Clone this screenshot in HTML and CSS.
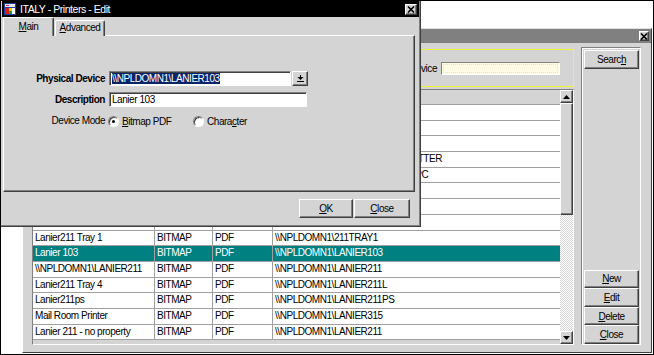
FILE: index.html
```html
<!DOCTYPE html>
<html lang="en">
<head>
    <meta charset="UTF-8">
    <title>ITALY - Printers</title>
    <link rel="stylesheet" href="styles.css">
</head>
<body>
<div class="desktop">

    <!-- printers list window (behind) -->
    <div class="window main-win">
        <div class="titlebar inactive">
            <span class="x-btn small">
                <svg width="8" height="7" viewBox="0 0 8 7"><path d="M1 0.5l6 6M7 0.5l-6 6" stroke="#000" stroke-width="1.6"/></svg>
            </span>
        </div>
        <div class="win-body">
            <div class="list-col">
                <div class="search-box">
                    <span class="search-label">Physical Device</span>
                    <div class="search-input"></div>
                </div>
                <div class="grid">
                    <div class="grid-rows">
                        <div class="grid-head">
                            <div class="cell"></div>
                            <div class="cell"></div>
                            <div class="cell"></div>
                            <div class="cell"></div>
                        </div>
                        <!-- rows 1-8 sit under the edit dialog -->
                        <div class="row"><div class="cell"></div><div class="cell"></div><div class="cell"></div><div class="cell"></div></div>
                        <div class="row"><div class="cell"></div><div class="cell"></div><div class="cell"></div><div class="cell"></div></div>
                        <div class="row"><div class="cell"></div><div class="cell"></div><div class="cell"></div><div class="cell"></div></div>
                        <div class="row"><div class="cell"></div><div class="cell"></div><div class="cell"></div><div class="cell tail">\\NPLDOMN1\HPDESIGNJETPLOTTER</div></div>
                        <div class="row"><div class="cell"></div><div class="cell"></div><div class="cell"></div><div class="cell tail">\\NPLDOMN1\LANIER211COLORPC</div></div>
                        <div class="row"><div class="cell"></div><div class="cell"></div><div class="cell"></div><div class="cell"></div></div>
                        <div class="row"><div class="cell"></div><div class="cell"></div><div class="cell"></div><div class="cell"></div></div>
                        <div class="row"><div class="cell"></div><div class="cell"></div><div class="cell"></div><div class="cell"></div></div>
                        <div class="row"><div class="cell">Lanier211 Tray 1</div><div class="cell">BITMAP</div><div class="cell">PDF</div><div class="cell">\\NPLDOMN1\211TRAY1</div></div>
                        <div class="row selected"><div class="cell">Lanier 103</div><div class="cell">BITMAP</div><div class="cell">PDF</div><div class="cell">\\NPLDOMN1\LANIER103</div></div>
                        <div class="row"><div class="cell">\\NPLDOMN1\LANIER211</div><div class="cell">BITMAP</div><div class="cell">PDF</div><div class="cell">\\NPLDOMN1\LANIER211</div></div>
                        <div class="row"><div class="cell">Lanier211 Tray 4</div><div class="cell">BITMAP</div><div class="cell">PDF</div><div class="cell">\\NPLDOMN1\LANIER211L</div></div>
                        <div class="row"><div class="cell">Lanier211ps</div><div class="cell">BITMAP</div><div class="cell">PDF</div><div class="cell">\\NPLDOMN1\LANIER211PS</div></div>
                        <div class="row"><div class="cell">Mail Room Printer</div><div class="cell">BITMAP</div><div class="cell">PDF</div><div class="cell">\\NPLDOMN1\LANIER315</div></div>
                        <div class="row"><div class="cell">Lanier 211 - no property</div><div class="cell">BITMAP</div><div class="cell">PDF</div><div class="cell">\\NPLDOMN1\LANIER211</div></div>
                    </div>
                    <div class="vscroll">
                        <span class="sb-btn">
                            <svg width="7" height="4" viewBox="0 0 7 4"><path d="M3.5 0L7 4H0z" fill="#000"/></svg>
                        </span>
                        <div class="sb-track">
                            <div class="sb-thumb"></div>
                        </div>
                        <span class="sb-btn">
                            <svg width="7" height="4" viewBox="0 0 7 4"><path d="M0 0h7L3.5 4z" fill="#000"/></svg>
                        </span>
                    </div>
                </div>
            </div>
            <div class="btn-panel">
                <button class="btn">Searc<u>h</u></button>
                <div class="btn-stack">
                    <button class="btn"><u>N</u>ew</button>
                    <button class="btn"><u>E</u>dit</button>
                    <button class="btn"><u>D</u>elete</button>
                    <button class="btn"><u>C</u>lose</button>
                </div>
            </div>
        </div>
    </div>

    <!-- edit dialog (front) -->
    <div class="window dialog">
        <div class="titlebar active">
            <svg class="app-icon" width="12" height="12" viewBox="0 0 12 12">
                <rect x="0" y="0" width="12" height="12" fill="#1c3fa8"/>
                <rect x="1" y="1" width="10" height="3" fill="#e8e8e8"/>
                <rect x="1" y="5" width="4" height="6" fill="#d62020"/>
                <rect x="5" y="5" width="3" height="3" fill="#f0d000"/>
                <rect x="8" y="5" width="3" height="6" fill="#ffffff"/>
                <rect x="5" y="8" width="3" height="3" fill="#2a9a2a"/>
                <rect x="2" y="2" width="3" height="1" fill="#c03070"/>
            </svg>
            <span class="title">ITALY - Printers - Edit</span>
            <span class="x-btn">
                <svg width="8" height="7" viewBox="0 0 8 7"><path d="M1 0.5l6 6M7 0.5l-6 6" stroke="#000" stroke-width="1.6"/></svg>
            </span>
        </div>

        <div class="tabs">
            <div class="tab current"><u>M</u>ain</div>
            <div class="tab"><u>A</u>dvanced</div>
        </div>

        <div class="tab-panel">
            <div class="form">
                <label class="lbl bold">Physical Device</label>
                <div class="field-line">
                    <div class="input device-input"><span class="sel">\\NPLDOMN1\LANIER103</span></div>
                    <span class="drop-btn">
                        <svg width="7" height="8" viewBox="0 0 7 8"><path d="M3 0h1v2h2.5L3.5 5 0.5 2H3z" fill="#000"/><rect x="0" y="6" width="7" height="1" fill="#000"/></svg>
                    </span>
                </div>

                <label class="lbl bold">Description</label>
                <div class="field-line">
                    <div class="input desc-input">Lanier 103</div>
                </div>

                <label class="lbl">Device Mode</label>
                <div class="radio-group">
                    <span class="option first"><span class="radio checked"></span><u>B</u>itmap PDF</span>
                    <span class="option"><span class="radio"></span>Chara<u>c</u>ter</span>
                </div>
            </div>
        </div>

        <div class="dlg-footer">
            <button class="btn dlg-btn ok"><u>O</u>K</button>
            <button class="btn dlg-btn close"><u>C</u>lose</button>
        </div>
    </div>

</div>
</body>
</html>
```

FILE: styles.css
```css
* {
    box-sizing: border-box;
}
body {
    margin: 0;
    font-family: "Liberation Sans", Arial, sans-serif;
    font-size: 10px;
    letter-spacing: -0.45px;
    color: #000;
}
u {
    text-decoration: underline;
    text-underline-offset: 1px;
}
.desktop {
    position: relative;
    width: 654px;
    height: 355px;
    background: #fff;
    border: 1px solid #000;
    overflow: hidden;
}

/* generic window chrome */
.window {
    position: absolute;
    background: #d4d4d4;
    display: flex;
    flex-direction: column;
}
.titlebar {
    display: flex;
    align-items: center;
    flex-shrink: 0;
}
.titlebar.inactive {
    height: 14px;
    background: #808080;
    justify-content: flex-end;
    padding-right: 2px;
}
.titlebar.active {
    height: 16px;
    background: #000;
    color: #fff;
    padding: 0 2px 0 2px;
}
.app-icon {
    margin-right: 4px;
}
.title {
    flex: 1;
    color: #fff;
    font-size: 10.5px;
}
.x-btn {
    width: 12px;
    height: 11px;
    background: #d4d4d4;
    border: 1px solid;
    border-color: #fff #404040 #404040 #fff;
    box-shadow: inset -1px -1px #808080;
    display: flex;
    align-items: center;
    justify-content: center;
}
.x-btn.small {
    width: 10px;
    height: 10px;
}
.x-btn svg {
    display: block;
}

/* buttons */
.btn {
    font: inherit;
    letter-spacing: inherit;
    color: #000;
    background: #d4d4d4;
    border: 1px solid;
    border-color: #fff #404040 #404040 #fff;
    box-shadow: inset -1px -1px #808080;
    padding: 0;
    display: flex;
    align-items: center;
    justify-content: center;
}

/* printers list window */
.main-win {
    left: 21px;
    top: 27px;
    width: 630px;
    height: 325px;
    border-top: 1px solid #e0e0e0;
    border-left: 1px solid #fff;
    border-right: 1px solid #404040;
    border-bottom: 1px solid #404040;
}
.win-body {
    flex: 1;
    display: flex;
    padding: 4px 9px 7px 9px;
}
.list-col {
    width: 542px;
    margin-top: 2px;
    display: flex;
    flex-direction: column;
}
.search-box {
    height: 38px;
    border: 1px solid #f4f430;
    display: flex;
    align-items: center;
    justify-content: flex-end;
    padding-right: 13px;
    padding-top: 1px;
}
.search-label {
    margin-right: 4px;
}
.search-input {
    width: 119px;
    height: 13px;
    background: #fffbe4;
    border: 1px solid;
    border-color: #808080 #fff #fff #808080;
    outline: 1px dotted #f0e0b0;
    outline-offset: -3px;
}
.grid {
    flex: 1;
    margin-top: 2px;
    display: flex;
    border: 1px solid;
    border-color: #808080 #fff #fff #808080;
    background: #d4d4d4;
}
.grid-rows {
    flex: 1;
    display: flex;
    flex-direction: column;
    overflow: hidden;
}
.grid-head,
.row {
    display: grid;
    grid-template-columns: 122px 58px 60px 1fr;
    flex-shrink: 0;
}
.grid-head {
    height: 15px;
    background: #d4d4d4;
    border-bottom: 1px solid #a0a0a0;
}
.row {
    height: 15.7px;
    background: #fff;
    border-bottom: 1px solid #a0a0a0;
}
.cell {
    padding-left: 2px;
    line-height: 14px;
    white-space: nowrap;
    overflow: hidden;
    border-right: 1px solid #a0a0a0;
}
.cell:last-child {
    border-right: none;
}
.grid-head .cell {
    border-right: none;
}
.row.selected {
    background: #008080;
    color: #fff;
}
.vscroll {
    width: 13px;
    display: flex;
    flex-direction: column;
}
.sb-btn {
    height: 13px;
    flex-shrink: 0;
    background: #d4d4d4;
    border: 1px solid;
    border-color: #fff #404040 #404040 #fff;
    box-shadow: inset -1px -1px #808080;
    display: flex;
    align-items: center;
    justify-content: center;
}
.sb-track {
    flex: 1;
    background: repeating-conic-gradient(#d4d4d4 0 25%, #fff 0 50%) 0 0 / 2px 2px;
}
.sb-thumb {
    height: 112px;
    background: #d4d4d4;
    border: 1px solid;
    border-color: #fff #404040 #404040 #fff;
    box-shadow: inset -1px -1px #808080;
}
.btn-panel {
    width: 60px;
    margin-left: 7px;
    display: flex;
    flex-direction: column;
    justify-content: space-between;
    padding: 2px 3px 0 2px;
    border: 1px solid;
    border-color: #808080 #fff #fff #808080;
    box-shadow: inset 1px 1px #fff;
}
.btn-panel .btn {
    width: 55px;
    height: 19px;
}
.btn-stack .btn {
    height: 18.6px;
}

/* edit dialog */
.dialog {
    left: -1px;
    top: -1px;
    width: 421px;
    height: 227px;
    border: 1px solid;
    border-color: #000 #404040 #404040 #404040;
    box-shadow: inset -1px -1px #808080;
    padding: 0 5px 0 2px;
}
.dialog .titlebar {
    margin: 0 -4px 0 -1px;
}
.tabs {
    height: 19px;
    display: flex;
    align-items: flex-end;
    position: relative;
    z-index: 1;
    margin-bottom: -1px;
}
.tab {
    width: 50px;
    height: 16px;
    margin-left: 1px;
    border-top: 1px solid #fff;
    border-left: 1px solid #fff;
    border-right: 1px solid #404040;
    box-shadow: inset -1px 0 #808080;
    border-top-left-radius: 2px;
    border-top-right-radius: 2px;
    text-align: center;
    line-height: 14px;
    background: #d4d4d4;
}
.tab.current {
    width: 51px;
    height: 19px;
    margin-left: 0;
    line-height: 17px;
}
.tab-panel {
    height: 157px;
    border: 1px solid;
    border-color: #fff #404040 #404040 #fff;
    box-shadow: inset -1px -1px #808080;
    padding-top: 35px;
}
.form {
    display: grid;
    grid-template-columns: 101px auto;
    column-gap: 4px;
    row-gap: 6px;
    align-items: center;
}
.lbl {
    text-align: right;
}
.lbl.bold {
    font-weight: bold;
}
.field-line {
    display: flex;
    align-items: center;
}
.input {
    height: 15px;
    background: #fff;
    border: 1px solid;
    border-color: #808080 #fff #fff #808080;
    box-shadow: inset 1px 1px #404040;
    padding-left: 2px;
    line-height: 13px;
    white-space: nowrap;
}
.device-input {
    width: 182px;
}
.desc-input {
    width: 198px;
}
.sel {
    background: #0a246a;
    color: #fff;
    display: inline-block;
    line-height: 11px;
}
.drop-btn {
    width: 16px;
    height: 15px;
    margin-left: 1px;
    background: #d4d4d4;
    border: 1px solid;
    border-color: #fff #404040 #404040 #fff;
    box-shadow: inset -1px -1px #808080;
    display: flex;
    align-items: center;
    justify-content: center;
}
.radio-group {
    display: flex;
    align-items: center;
    margin-top: 3px;
    margin-left: -1px;
}
.option {
    display: flex;
    align-items: center;
}
.option.first {
    width: 85px;
}
.radio {
    width: 11px;
    height: 11px;
    border-radius: 50%;
    background: #fff;
    border: 1px solid;
    border-color: #808080 #fff #fff #808080;
    box-shadow: inset 1px 1px #404040;
    margin-right: 3px;
    position: relative;
}
.radio.checked::after {
    content: "";
    position: absolute;
    left: 3px;
    top: 3px;
    width: 3px;
    height: 3px;
    border-radius: 50%;
    background: #000;
}
.dlg-footer {
    flex: 1;
    display: flex;
    justify-content: flex-end;
    align-items: flex-start;
    padding: 7px 5px 0 0;
    gap: 1px;
}
.dlg-btn {
    height: 19px;
}
.dlg-btn.ok {
    width: 54px;
}
.dlg-btn.close {
    width: 56px;
}
```
